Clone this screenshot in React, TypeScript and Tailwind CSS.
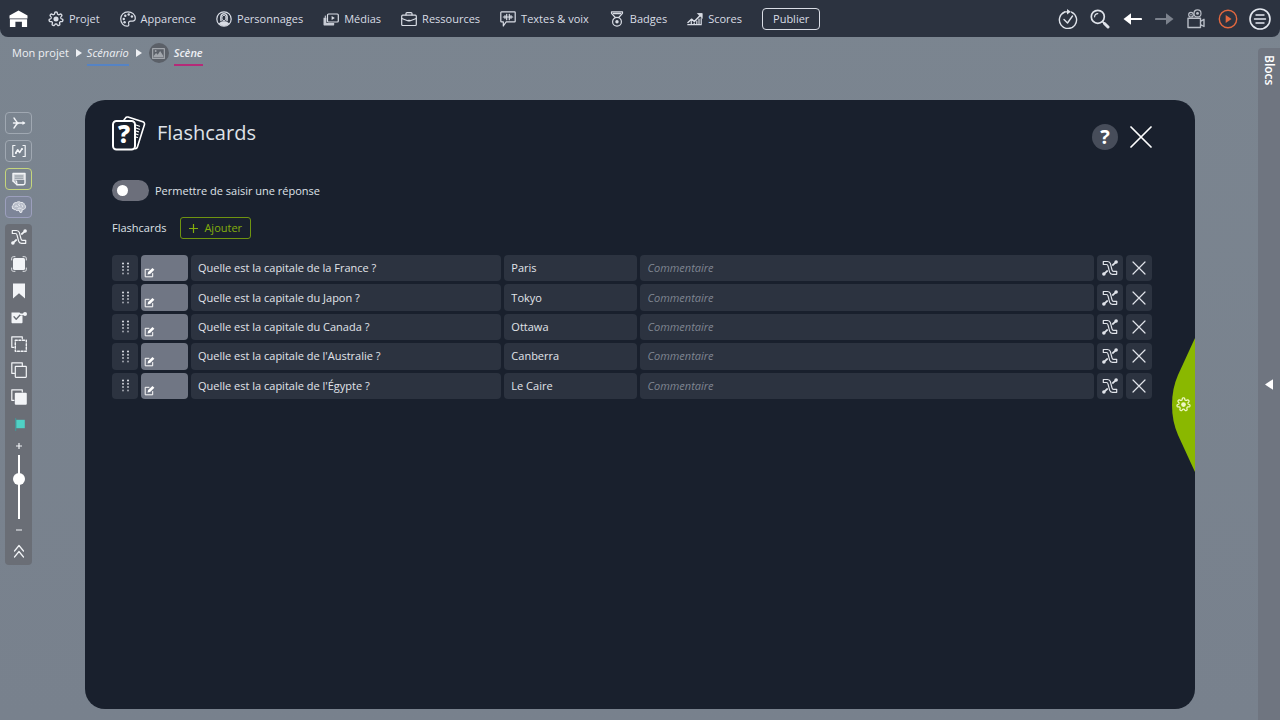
import React, { useState } from 'react';

type IconProps = { className?: string };

function wavyGear(teeth: number, radius: number, depth: number) {
  const steps = 140;
  const points: string[] = [];
  for (let i = 0; i < steps; i++) {
    const a = (i / steps) * Math.PI * 2;
    const wave = Math.tanh(2 * Math.cos(teeth * a));
    const r = radius + depth * wave;
    points.push(`${(12 + r * Math.sin(a)).toFixed(2)} ${(12 - r * Math.cos(a)).toFixed(2)}`);
  }
  return `M${points.join('L')}Z`;
}

const GEAR = wavyGear(7, 9, 1.6);

function Svg({ className = 'size-4', children, box = '0 0 16 16' }: IconProps & { children: React.ReactNode; box?: string }) {
  return (
    <svg
      className={`${className} shrink-0`}
      viewBox={box}
      fill="none"
      stroke="currentColor"
      strokeWidth="1.2"
      strokeLinecap="round"
      strokeLinejoin="round"
      aria-hidden="true"
    >
      {children}
    </svg>
  );
}

const GearIcon = ({ className }: IconProps) => (
  <Svg className={className} box="0 0 24 24">
    <path d={GEAR} strokeWidth="2" />
    <circle cx="12" cy="12" r="3.8" fill="currentColor" stroke="none" />
  </Svg>
);

const HomeIcon = () => (
  <Svg className="h-[18px] w-[19px]" box="0 0 19 18">
    <path d="M9.5 .5 18.5 5.5V8.6H.5V5.5z" fill="currentColor" stroke="none" />
    <path d="M.9 9.2h17.2V17h-5.2v-5.2H6.4V17H.9z" fill="currentColor" stroke="none" />
  </Svg>
);

const PaletteIcon = () => (
  <Svg>
    <path d="M8 .8C3.8.8.7 3.9.7 7.8c0 4.2 2.9 7.4 6.4 7.4 1.700 0 2-1.100 1.600-2.200-.5-1.600.3-2.900 2-2.900h1.800c1.800 0 2.800-1.100 2.800-2.800C15.300 3.600 12 .8 8 .8z" />
    <g fill="currentColor" stroke="none">
      <circle cx="3.8" cy="8" r="1.2" />
      <circle cx="5.3" cy="4.7" r="1.2" />
      <circle cx="8.7" cy="3.5" r="1.2" />
      <circle cx="11.9" cy="5.5" r="1.2" />
      <circle cx="4.6" cy="11.2" r="1.2" />
    </g>
  </Svg>
);

const PersonIcon = () => (
  <Svg>
    <circle cx="8" cy="8" r="7.2" />
    <path d="M5 9.5C4.2 5 5.4 2.7 8 2.7s3.8 2.3 3 6.8" strokeWidth="1.5" />
    <ellipse cx="8" cy="7" rx="2.1" ry="2.7" strokeWidth=".9" />
    <path d="M2.8 12.6c1-1.5 2.700-2 4-2.400h2.400c1.300.4 3 .9 4 2.400-2.800 3.200-7.600 3.200-10.400 0z" fill="currentColor" stroke="none" />
  </Svg>
);

const MediaIcon = () => (
  <Svg>
    <rect x="4.500" y="3" width="10.800" height="8" rx="1" />
    <path d="M8.600 4.900v4L11.800 7z" fill="currentColor" stroke="none" />
    <path d="M.5 6.800h2.900V12h7.800v1.800c0 .4-.2.600-.6.600H1.500c-.6 0-1-.4-1-1z" fill="currentColor" stroke="none" opacity=".9" />
    <path d="M2.300 5v1.500" strokeWidth="1" />
  </Svg>
);

const BriefcaseIcon = () => (
  <Svg>
    <rect x=".7" y="4.200" width="14.600" height="10.300" rx="1" />
    <path d="M5 4V2.600c0-.6.400-1 1-1h4c.6 0 1 .4 1 1V4M.8 7.500 6.700 9.700h2.600l5.900-2.200" />
    <path d="M6.800 8.800h2.400v1.500H6.800z" fill="currentColor" stroke="none" />
  </Svg>
);

const VoiceIcon = () => (
  <Svg>
    <path d="M1.500.9h13c.4 0 .7.3.7.7v8.600c0 .4-.3.7-.7.7H6.200L3.300 15v-4.100H1.500c-.4 0-.7-.3-.7-.7V1.600c0-.4.300-.7.7-.7z" />
    <path d="M3.300 6h9.400M5 4.700v2.600M6.700 3.300v5.400M9.300 3.300v5.400M11 4.700v2.600" />
  </Svg>
);

const BadgeIcon = () => (
  <Svg>
    <path d="M2.500.8h11v1.500L9.700 6.500H6.300L2.500 2.300z" />
    <path d="M4.500 2.500h7" strokeWidth="1.500" />
    <circle cx="8" cy="10.800" r="4.400" />
    <circle cx="8" cy="10.800" r="1.700" fill="currentColor" stroke="none" />
  </Svg>
);

const ScoreIcon = () => (
  <Svg>
    <path d="m1 11.500 3.500-3.300 2.800 2.300 5.900-6" strokeWidth="1.500" />
    <path d="M10.800 2.500h4.400V7z" fill="currentColor" strokeWidth=".8" />
    <path d="M.8 13.700h13.400M4.300 10.500v3M7.200 12v1.500M9.800 10v3.500M12 8v5.500M14.200 7.500v6" />
  </Svg>
);

const HistoryCheckIcon = () => (
  <Svg className="size-5" box="0 0 20 20">
    <path d="M13.500 3.100A8.600 8.600 0 1 1 6.700 3" strokeWidth="1.400" />
    <path d="M6.800 2.900h3" />
    <path d="M9 0 12.800 2.700 9 5.400z" fill="currentColor" stroke="none" />
    <path d="m6 10.500 3.500 3.500L14.500 7" strokeWidth="1.400" />
  </Svg>
);

const SearchIcon = () => (
  <Svg className="size-5" box="0 0 20 20">
    <circle cx="7.800" cy="7.800" r="6.500" strokeWidth="1.700" />
    <path d="M4.600 7.800a3.200 3.200 0 0 1 3.200-3.200" />
    <path d="m12.600 12.600 1.500 1.500" strokeWidth="1.500" />
    <path d="m14.500 14.500 3.500 3.500" strokeWidth="3" />
  </Svg>
);

const ArrowIcon = ({ className = '' }: IconProps) => (
  <Svg className={`h-[14px] w-[19px] ${className}`} box="0 0 19 14">
    <path d="M.5 7 8 1.300v11.400z" fill="currentColor" stroke="none" />
    <path d="M7 7h11" strokeWidth="2.200" />
  </Svg>
);

const CameraIcon = () => (
  <Svg className="size-5" box="0 0 20 20">
    <circle cx="5" cy="5.700" r="2.300" />
    <circle cx="11.500" cy="4.400" r="3.500" />
    <circle cx="5" cy="5.700" r=".8" fill="currentColor" stroke="none" />
    <circle cx="11.500" cy="4.400" r="1.400" fill="currentColor" stroke="none" />
    <path d="M2 9.200h12.500v9.300H2zM14.500 12.300l3.500-2v7.200l-3.500-2" strokeWidth="1.400" />
  </Svg>
);

const PlayIcon = () => (
  <Svg className="size-5" box="0 0 20 20">
    <circle cx="10" cy="10" r="8.700" strokeWidth="1.400" />
    <path d="M7.700 6v8l5.800-4z" fill="currentColor" stroke="none" />
  </Svg>
);

const MenuIcon = () => (
  <Svg className="size-[22px]" box="0 0 22 22">
    <circle cx="11" cy="11" r="10" strokeWidth="1.600" />
    <path d="M7 7h8M5.500 11h11M7 15h8" strokeWidth="1.400" />
  </Svg>
);

const LinkIcon = ({ className }: IconProps) => (
  <Svg className={className}>
    <path d="M2 13.800 5.200 11M10.800 5l3.200-2.800" strokeWidth="1.700" />
    <path
      d="M1.300 1.500h4.200c1.600 0 2.500.7 2.900 2.200l1.600 6.200c.2 1 .7 1.400 1.600 1.400h3.100v3h-4.200c-1.600 0-2.500-.7-2.900-2.200L6 5.900c-.2-1-.7-1.400-1.600-1.400H1.300z"
      strokeWidth="1.200"
    />
    <circle cx="1.900" cy="14" r="1.800" fill="currentColor" stroke="none" />
    <circle cx="14.100" cy="2" r="1.800" fill="currentColor" stroke="none" />
  </Svg>
);

const PencilIcon = () => (
  <Svg className="size-[11px]" box="0 0 11 11">
    <path d="M5 2.300H1.200v7.500h7.500V6.500" strokeWidth="1" />
    <path d="m3.500 7.600.6-2.600L8.500 1l1.900 1.800-4.300 4.200z" fill="currentColor" stroke="none" />
  </Svg>
);

const CrossIcon = ({ className }: IconProps) => (
  <Svg className={className}>
    <path d="m2 2 12 12M14 2 2 14" />
  </Svg>
);

const GripIcon = () => (
  <Svg className="h-[13px] w-[9px]" box="0 0 9 13">
    <g fill="currentColor" stroke="none">
      {[1.500, 4.800, 8.100, 11.400].map((y, i) => (
        <g key={y} opacity={1 - i * 0.12}>
          <circle cx="2" cy={y} r="1" />
          <circle cx="7" cy={y} r="1" />
        </g>
      ))}
    </g>
  </Svg>
);

const CardsIcon = () => (
  <Svg className="h-[35px] w-[34px] text-white" box="0 0 34 35">
    <path d="M12 4 13.500 2c.5-.9 1.500-1.200 2.500-.9l14.800 4.700c1.300.4 2 1.600 1.600 2.900l-7 22.300c-.4 1.200-1.300 1.800-2.500 1.700" strokeWidth="1.600" />
    <rect x="1" y="5" width="22" height="28.500" rx="3.500" strokeWidth="2" />
    <path d="m24 9 3.500 1.200M24 12l3.500 1.200M24 15l2.500.9M24 18l2 .7M24 21l1.400.5" />
    <text
      x="12"
      y="27"
      textAnchor="middle"
      fill="currentColor"
      stroke="none"
      className="font-['Open_Sans'] text-[24px] font-extrabold"
    >
      ?
    </text>
  </Svg>
);

const BranchIcon = () => (
  <Svg>
    <path d="M3 3c1.500 1.500 2 5 5 5M3 13c1.500-1.500 2-5 5-5M2.500 8H13" strokeWidth="1.400" />
    <path d="M11.500 6 14.500 8l-3 2z" fill="currentColor" stroke="none" />
  </Svg>
);

const VariableIcon = () => (
  <Svg>
    <path d="M4 2.500H1.800v11H4M12 2.500h2.200v11H12" />
    <path d="m4.700 10 2-3.300L8.600 9.500l2.200-3.300" strokeWidth="1.500" />
    <circle cx="11" cy="6" r="1.100" fill="currentColor" stroke="none" />
    <circle cx="4.900" cy="9.900" r="1" fill="currentColor" stroke="none" />
  </Svg>
);

const NoteIcon = () => (
  <Svg>
    <path d="M2 2.500h12V12c0 1-.7 1.700-1.700 1.700H6L2 10z" strokeWidth="1.400" />
    <path d="M2 2.500h12V9H2z" fill="currentColor" stroke="none" opacity=".7" />
    <path d="M4.200 5h7.600M4.200 7.200h7.600" stroke="#7b8590" strokeWidth=".8" />
    <path d="M2 10h3.500l.5 3.700" />
  </Svg>
);

const BrainIcon = () => (
  <Svg>
    <path
      d="M2 9.700C.8 8.500 1 6.800 2.200 6.200 2.300 4.300 3.800 3.300 5.300 3.700 6.500 2.500 8.800 2.400 9.800 3.500c2-.4 3.400.6 3.600 2.200 1.300.8 1.600 2.700.5 3.800-.6 1-1.700 1.200-2.500.9l-.7 2.900-1.700.2-.9-2.400C6 12 4.800 11.600 4.500 10.600c-1 .2-1.900-.1-2.500-.9z"
      fill="currentColor"
      fillOpacity=".5"
      strokeWidth=".9"
    />
    <path d="M4 7.500c1-.9 2-.7 2.600.2M8 4.800c-.7.9-.3 1.800.7 2M10.800 6c.9.500 1 1.300.5 2M7 9.500c1-.6 2.200-.6 3.200.1" strokeWidth=".9" />
  </Svg>
);

const FrameIcon = () => (
  <Svg>
    <rect x="2" y="2" width="12" height="12" rx="1.500" fill="currentColor" stroke="none" />
    <path d="M.7 4V2.300C.7 1.400 1.400.7 2.300.7H4M12 .7h1.700c.9 0 1.600.7 1.600 1.600V4M15.300 12v1.700c0 .9-.7 1.600-1.600 1.600H12M4 15.300H2.300c-.9 0-1.600-.7-1.600-1.600V12" strokeWidth=".9" />
  </Svg>
);

const BookmarkIcon = () => (
  <Svg>
    <path d="M2 .5h12v15L8 10.300 2 15.500z" fill="currentColor" stroke="none" />
  </Svg>
);

const CheckLinkIcon = () => (
  <Svg>
    <path d="M.5 3.500h8L10 5l1.500 1v7.200c0 .7-.5 1.100-1.100 1.100H1.600c-.6 0-1.100-.4-1.100-1.100z" fill="currentColor" stroke="none" />
    <path d="m3 7.800 2.200 2.500L9.300 5.800l4-.4" stroke="#6a6e76" strokeWidth="1.300" />
    <path d="M9.500 5.200h4" strokeWidth="1.600" />
    <circle cx="14" cy="5" r="2" fill="currentColor" stroke="none" />
  </Svg>
);

const DashedCopyIcon = () => (
  <Svg>
    <path d="M3 11.300H.8V.8h10.500V3" />
    <rect x="4.300" y="4.300" width="11" height="11" strokeDasharray="2 1.600" strokeWidth="1.400" />
  </Svg>
);

const CopyIcon = () => (
  <Svg>
    <path d="M3.500 11.300H.8V.8h10.500v2.700" />
    <rect x="4.300" y="4.300" width="11" height="11" rx=".5" />
  </Svg>
);

const PasteIcon = () => (
  <Svg>
    <path d="M3 11.300H.8V.8h10.500V3" />
    <rect x="3.800" y="3.800" width="12" height="12" rx="1" fill="currentColor" stroke="none" />
  </Svg>
);

const FlagIcon = () => (
  <Svg className="size-4 text-[#4fd1c5]">
    <path d="M5.200 3.800h8.600v8.400H5.200z" fill="currentColor" stroke="none" />
    <path d="M4.700 2.500v12" stroke="#3a9fa0" strokeWidth=".9" />
  </Svg>
);

const PictureIcon = () => (
  <Svg className="size-[13px]">
    <rect x=".8" y="2" width="14.400" height="12" strokeWidth="1.500" />
    <path d="m2 11 3-3.500 2 2 3-4.500 4 6v1.500H2z" fill="currentColor" stroke="none" />
    <circle cx="4.500" cy="5" r="1.200" fill="currentColor" stroke="none" />
  </Svg>
);

const Triangle = ({ className = '' }: IconProps) => (
  <Svg className={className} box="0 0 6 8">
    <path d="M0 0v8l6-4z" fill="currentColor" stroke="none" />
  </Svg>
);

const menu = [
  { label: 'Projet', icon: <GearIcon /> },
  { label: 'Apparence', icon: <PaletteIcon /> },
  { label: 'Personnages', icon: <PersonIcon /> },
  { label: 'Médias', icon: <MediaIcon /> },
  { label: 'Ressources', icon: <BriefcaseIcon /> },
  { label: 'Textes & voix', icon: <VoiceIcon /> },
  { label: 'Badges', icon: <BadgeIcon /> },
  { label: 'Scores', icon: <ScoreIcon /> },
];

const actions = [
  { label: 'Vérifier', icon: <HistoryCheckIcon />, color: 'text-[#dfe3ea]' },
  { label: 'Rechercher', icon: <SearchIcon />, color: 'text-[#dfe3ea]' },
  { label: 'Annuler', icon: <ArrowIcon />, color: 'text-white' },
  { label: 'Rétablir', icon: <ArrowIcon className="rotate-180" />, color: 'text-[#7c828d]' },
  { label: 'Caméra', icon: <CameraIcon />, color: 'text-[#b9bec7]' },
  { label: 'Lecture', icon: <PlayIcon />, color: 'text-[#e2683f]' },
  { label: 'Menu', icon: <MenuIcon />, color: 'text-[#e4e8ef]' },
];

const modes = [
  { label: 'Liens', icon: <BranchIcon />, style: 'border-[#a0a8b2]' },
  { label: 'Variables', icon: <VariableIcon />, style: 'border-[#a0a8b2]' },
  { label: 'Notes', icon: <NoteIcon />, style: 'border-[#c6d67c]' },
  { label: 'IA', icon: <BrainIcon />, style: 'border-[#9c9fbd] bg-[#7d8598]' },
];

const tools = [
  { label: 'Relier', icon: <LinkIcon /> },
  { label: 'Cadrer', icon: <FrameIcon /> },
  { label: 'Signet', icon: <BookmarkIcon /> },
  { label: 'Valider', icon: <CheckLinkIcon /> },
  { label: 'Sélectionner', icon: <DashedCopyIcon /> },
  { label: 'Copier', icon: <CopyIcon /> },
  { label: 'Coller', icon: <PasteIcon /> },
  { label: 'Drapeau', icon: <FlagIcon /> },
];

const cards = [
  { question: 'Quelle est la capitale de la France ?', answer: 'Paris' },
  { question: 'Quelle est la capitale du Japon ?', answer: 'Tokyo' },
  { question: 'Quelle est la capitale du Canada ?', answer: 'Ottawa' },
  { question: "Quelle est la capitale de l'Australie ?", answer: 'Canberra' },
  { question: "Quelle est la capitale de l'Égypte ?", answer: 'Le Caire' },
];

function Header() {
  return (
    <header className="flex h-[37px] items-center justify-between rounded-b-lg bg-[#2c3340] pl-[9px] pr-1 text-[#d9dde5]">
      <nav className="flex items-center gap-5">
        <a href="#accueil" aria-label="Accueil" className="text-white">
          <HomeIcon />
        </a>
        {menu.map((item) => (
          <button key={item.label} className="flex items-center gap-[5px] whitespace-nowrap">
            {item.icon}
            {item.label}
          </button>
        ))}
        <button className="h-[22px] rounded border border-[#d9dde5] px-2.5">Publier</button>
      </nav>
      <div className="flex items-center">
        {actions.map((action) => (
          <button key={action.label} aria-label={action.label} className={`flex w-8 justify-center ${action.color}`}>
            {action.icon}
          </button>
        ))}
      </div>
    </header>
  );
}

function Breadcrumb() {
  return (
    <nav aria-label="Fil d'Ariane" className="flex h-8 items-center pl-3 text-[#eef0f4]">
      <a href="#projet">Mon projet</a>
      <Triangle className="ml-[7px] mr-[5px] h-2 w-1.5" />
      <a href="#scenario" className="border-b-2 border-[#5583c4] pb-[3px] pt-[5px] italic">Scénario</a>
      <Triangle className="ml-[7px] mr-[7px] h-2 w-1.5" />
      <span className="mr-[5px] flex size-5 items-center justify-center rounded-full bg-[#5b6068] text-[#a1a5ab]">
        <PictureIcon />
      </span>
      <a href="#scene" className="border-b-2 border-[#b52a78] pb-[3px] pt-[5px] font-semibold italic">Scène</a>
    </nav>
  );
}

function Toolbar() {
  const [zoom, setZoom] = useState(65);

  return (
    <aside className="mt-3 w-[27px] shrink-0 self-start text-[#f2f4f7]">
      <div className="flex flex-col gap-1.5">
        {modes.map((mode) => (
          <button
            key={mode.label}
            aria-label={mode.label}
            className={`flex h-[22px] items-center justify-center rounded border ${mode.style}`}
          >
            {mode.icon}
          </button>
        ))}
      </div>
      <div className="mt-1.5 flex flex-col items-center rounded bg-[#6a6e76] pb-1">
        <div className="grid h-[213px] auto-rows-fr">
          {tools.map((tool) => (
            <button key={tool.label} aria-label={tool.label} className="flex items-center justify-center">
              {tool.icon}
            </button>
          ))}
        </div>
        <button aria-label="Agrandir" className="flex h-[18px] items-center justify-center">
          <Svg className="size-1.5" box="0 0 6 6">
            <path d="M0 3h6M3 0v6" />
          </Svg>
        </button>
        <input
          type="range"
          aria-label="Zoom"
          value={zoom}
          onChange={(e) => setZoom(Number(e.target.value))}
          className="h-16 w-0.5 appearance-none bg-white [direction:rtl] [writing-mode:vertical-lr] [&::-webkit-slider-thumb]:size-3 [&::-webkit-slider-thumb]:appearance-none [&::-webkit-slider-thumb]:rounded-full [&::-webkit-slider-thumb]:bg-white"
        />
        <button aria-label="Réduire" className="flex h-[22px] items-center justify-center">
          <Svg className="size-1.5" box="0 0 6 6">
            <path d="M0 3h6" />
          </Svg>
        </button>
        <button aria-label="Replier" className="flex h-5 items-center justify-center">
          <Svg className="h-[14px] w-3" box="0 0 12 14">
            <path d="M1.500 7 6 1.500 10.500 7M1.500 13 6 7.500l4.500 5.500" />
          </Svg>
        </button>
      </div>
    </aside>
  );
}

function CardRow({ question, answer }: { question: string; answer: string }) {
  const field = 'w-full min-w-0 rounded-sm bg-[#2c3340] px-[7px] text-[#e1e4ea] outline-none placeholder:text-[#7f8591] placeholder:italic placeholder:opacity-100';
  const cell = 'flex items-center justify-center rounded-sm bg-[#2c3340] text-[#e1e4ea]';

  return (
    <li className="grid grid-cols-[26px_47px_310fr_133fr_453fr_26px_26px] gap-[3px]">
      <button aria-label="Déplacer" className={cell}>
        <GripIcon />
      </button>
      <button aria-label="Modifier l'image" className="flex items-end rounded-sm bg-[#707684] pb-[3px] pl-[3px] text-white">
        <PencilIcon />
      </button>
      <input aria-label="Question" defaultValue={question} className={field} />
      <input aria-label="Réponse" defaultValue={answer} className={field} />
      <input aria-label="Commentaire" placeholder="Commentaire" className={field} />
      <button aria-label="Relier" className={cell}>
        <LinkIcon />
      </button>
      <button aria-label="Supprimer" className={cell}>
        <CrossIcon />
      </button>
    </li>
  );
}

function FlashcardsPanel() {
  return (
    <main className="relative ml-[53px] mr-[63px] flex-1 overflow-hidden rounded-[20px] bg-[#19202d] pb-6 pl-[27px] pr-[43px] pt-[15px] text-[#dfe2e8]">
      <div className="flex items-start justify-between">
        <h1 className="flex items-center gap-[11px] text-[20px] leading-[35px]">
          <CardsIcon />
          <span className="pb-0.5">Flashcards</span>
        </h1>
        <div className="flex items-center gap-3 pt-[9px]">
          <button aria-label="Aide" className="size-[26px] rounded-full bg-[#474d5a] text-[20px] font-bold leading-[26px] text-white">
            ?
          </button>
          <button aria-label="Fermer" className="text-white">
            <Svg className="size-[22px]" box="0 0 22 22">
              <path d="m1 1 20 20M21 1 1 21" strokeWidth="1.700" />
            </Svg>
          </button>
        </div>
      </div>

      <label className="mt-7 flex w-fit items-center gap-1.5">
        <input
          type="checkbox"
          className="h-[21px] w-[37px] appearance-none rounded-full bg-[#6c6f7b] p-[5px] before:block before:size-[11px] before:rounded-full before:bg-white checked:bg-[#8ab800] checked:before:ml-4"
        />
        Permettre de saisir une réponse
      </label>

      <div className="mt-4 flex items-center gap-3.5">
        <h2>Flashcards</h2>
        <button className="flex h-[22px] items-center gap-1.5 rounded-[3px] border border-[#6f9410] px-2 text-[#84ae0c]">
          <Svg className="size-[9px]" box="0 0 9 9">
            <path d="M.5 4.500h8M4.500.5v8" />
          </Svg>
          Ajouter
        </button>
      </div>

      <ul className="mt-4 grid h-36 auto-rows-fr gap-[3px]">
        {cards.map((card) => (
          <CardRow key={card.answer} {...card} />
        ))}
      </ul>

      <button aria-label="Paramètres" className="absolute right-0 top-1/2 flex h-[134px] w-[23px] -translate-y-1/2 items-center justify-center text-[#eef7c4]">
        <svg className="absolute inset-0 size-full" viewBox="0 0 23 134" aria-hidden="true">
          <path d="M23 0 6 37C2 46 0 56 0 67s2 21 6 30l17 37z" fill="#8ab800" />
        </svg>
        <span className="relative">
          <GearIcon className="size-[15px]" />
        </span>
      </button>
    </main>
  );
}

export default function App() {
  return (
    <div className="flex min-h-screen flex-col bg-linear-to-b from-[#7b8590] to-[#78818d] font-['Open_Sans','Noto_Sans',sans-serif] text-[11px] leading-4">
      <Header />
      <div className="flex flex-1">
        <div className="flex flex-1 flex-col">
          <Breadcrumb />
          <div className="flex flex-1 pb-[11px] pl-[5px] pt-[31px]">
            <Toolbar />
            <FlashcardsPanel />
          </div>
        </div>
        <aside className="mt-[11px] grid w-[22px] grid-rows-[1fr_auto_1fr] justify-items-center rounded-tl bg-[#6f7580] text-white">
          <h2 className="mt-[7px] text-[12px] font-semibold [writing-mode:vertical-rl]">Blocs</h2>
          <button aria-label="Ouvrir les blocs">
            <Triangle className="h-[11px] w-2 rotate-180" />
          </button>
        </aside>
      </div>
    </div>
  );
}
